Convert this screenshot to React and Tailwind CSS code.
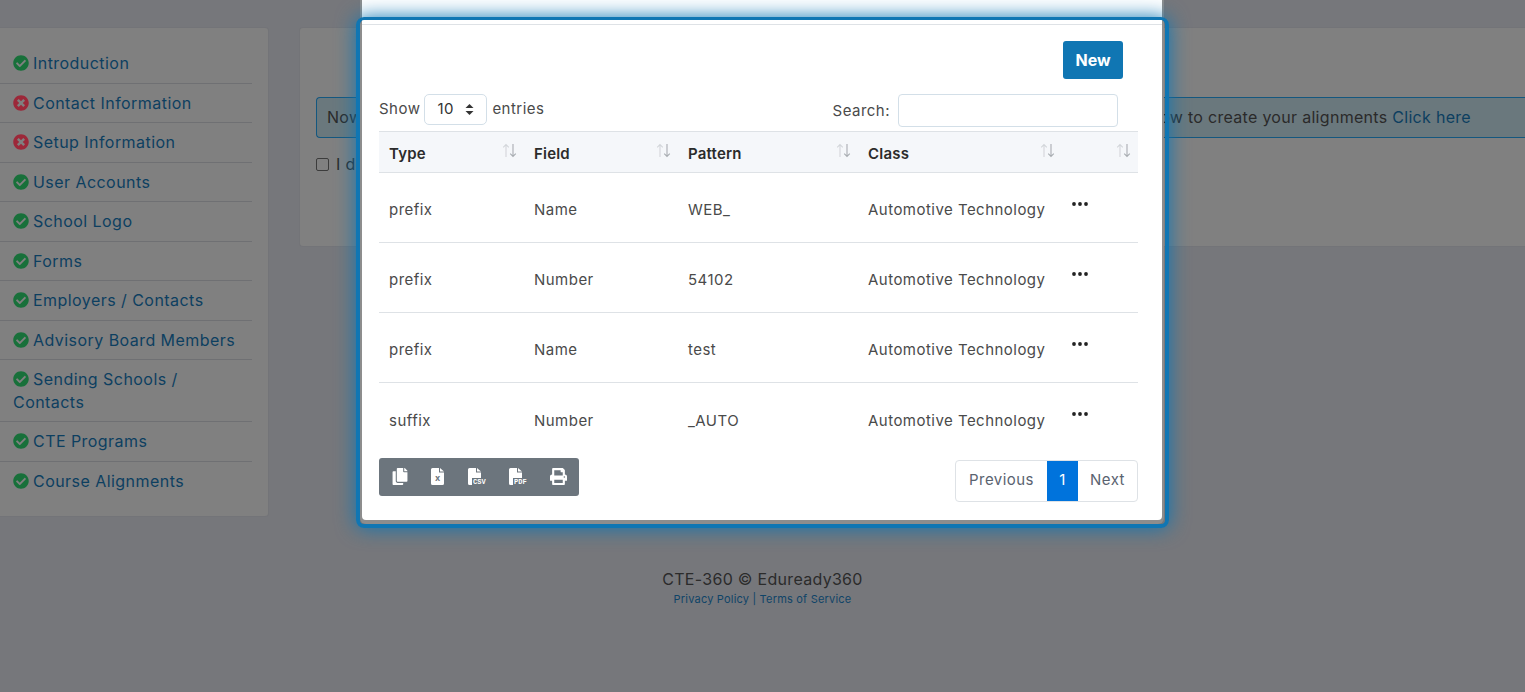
import { FaCheckCircle, FaTimesCircle, FaCopy, FaPrint } from 'react-icons/fa';

const menu = [
  { label: 'Introduction', ok: true },
  { label: 'Contact Information', ok: false },
  { label: 'Setup Information', ok: false },
  { label: 'User Accounts', ok: true },
  { label: 'School Logo', ok: true },
  { label: 'Forms', ok: true },
  { label: 'Employers / Contacts', ok: true },
  { label: 'Advisory Board Members', ok: true },
  { label: 'Sending Schools / Contacts', ok: true },
  { label: 'CTE Programs', ok: true },
  { label: 'Course Alignments', ok: true, last: true },
];

const rows = [
  ['prefix', 'Name', 'WEB_', 'Automotive Technology'],
  ['prefix', 'Number', '54102', 'Automotive Technology'],
  ['prefix', 'Name', 'test', 'Automotive Technology'],
  ['suffix', 'Number', '_AUTO', 'Automotive Technology'],
];

function SortIcon() {
  return (
    <svg width="15" height="15" viewBox="0 0 15 15" fill="none" className="absolute right-[7px] top-[11px]">
      <path d="M4 14V1.5M1.2 4.3 4 1.5l2.8 2.8" stroke="#d3d6da" strokeWidth="1.1" />
      <path d="M11 1v12.5M8.2 10.7 11 13.5l2.8-2.8" stroke="#a9adb2" strokeWidth="1.1" />
    </svg>
  );
}

function FileIcon({ label, small, className }) {
  return (
    <div className={`relative h-[18px] ${className}`}>
      <svg width="13" height="17" viewBox="0 0 13 17" className="absolute left-0 top-0">
        <path d="M1.5 0H8v4.5h5V15.5a1.5 1.5 0 0 1-1.5 1.5h-10A1.5 1.5 0 0 1 0 15.5v-14A1.5 1.5 0 0 1 1.5 0Z" fill="#fff" />
        <path d="M9 0l4 3.6H9Z" fill="#fff" />
      </svg>
      <span
        className={
          small
            ? 'absolute left-[4px] top-[5px] text-[9px] leading-[10px] tracking-normal font-bold text-[#6c757d]'
            : 'absolute left-[4px] top-[10px] px-[1px] bg-[#6c757d] text-[7px] leading-[8px] tracking-normal font-bold text-white font-["Liberation_Mono",monospace]'
        }
      >
        {label}
      </span>
    </div>
  );
}

export default function App() {
  return (
    <div className='relative h-[692px] overflow-hidden bg-[#76777b] font-["Inter",sans-serif] text-[15px] leading-[22.5px]'>
      <div className="flex items-start pt-[27px]">
        <div className="w-[269px] shrink-0 bg-[#808080] border border-l-0 border-[#737478] rounded-r-[4px] py-4 text-[16px] tracking-[0.45px]">
          {menu.map((item) => (
            <div
              key={item.label}
              className={`mr-4 pl-[13px] pr-4 pt-2 pb-2 text-[#0d3f60] ${item.last ? '' : 'border-b border-[#6f7073]'}`}
            >
              {item.ok ? (
                <FaCheckCircle className="inline-block w-4 h-4 mr-1 mb-[3px] text-[#18703a]" />
              ) : (
                <FaTimesCircle className="inline-block w-4 h-4 mr-1 mb-[3px] text-[#9c2839]" />
              )}
              {item.label}
            </div>
          ))}
        </div>

        <div className="ml-[30px] flex-1 h-[220px] bg-[#808080] border border-r-0 border-[#737478] rounded-l-[4px] pl-4 pt-[69px] text-[16px] tracking-[0.3px]">
          <div className="h-[41px] flex items-center justify-between border border-r-0 border-[#14577f] rounded-l-[4px] bg-[#6a787d] pl-[10px] pr-[54px] text-[#2a2a2a]">
            <span>Now you can</span>
            <span>
              how to create your alignments <span className="text-[#0d3f60]">Click here</span>
            </span>
          </div>
          <div className="mt-[15px] flex items-center text-[#2a2a2a]">
            <span className="w-[13px] h-[13px] border border-[#3c3c3c] rounded-[2px] mr-[7px]" />
            <span>I do not need this</span>
          </div>
        </div>
      </div>

      <div className="mt-[50px] text-center text-[#2b2b2b]">
        <div className="text-[16px] leading-[24px] tracking-[0.3px]">CTE-360 © Eduready360</div>
        <div className="text-[11px] leading-[16px] tracking-[0.2px] text-[#0f4468]">Privacy Policy | Terms of Service</div>
      </div>

      {/* modal */}
      <div className="absolute left-[362px] top-[-40px] w-[800px] h-[560px] bg-white rounded-[4px] shadow-[0_2px_0_2px_#8d8d8d] text-[#4a4a4a] tracking-[0.47px]">
        <div className="h-[65px] border-b border-[#dee2e6] pl-[157px] pt-[10px] text-[20px] leading-[30px]">
          Alignments
        </div>

        <div className="px-[17px] pt-4">
          <div className="flex justify-end pr-[22px]">
            <button className="w-[60px] h-[38px] bg-[#1076b3] rounded-[3px] text-white font-bold text-[16px] tracking-normal">New</button>
          </div>

          <div className="mt-[15px] h-[37px] flex items-start w-[759px]">
            <span className="mt-[4px]">Show</span>
            <div className="ml-1 w-[63px] h-[31px] flex items-center justify-between border border-[#d3dfe8] rounded-[5px] pl-[12px] pr-[12px] text-[#333]">
              <span>10</span>
              <svg width="9" height="13" viewBox="0 0 9 13" fill="#333">
                <path d="M4.5 1 8.5 5h-8ZM4.5 12 .5 8h8Z" />
              </svg>
            </div>
            <span className="ml-[5px] mt-[4px]">entries</span>
            <span className="ml-auto mt-[6px]">Search:</span>
            <div className="ml-2 mr-[20px] w-[220px] h-[33px] border border-[#d3dfe8] rounded-[4px]" />
          </div>

          <table className="w-[759px] table-fixed border-collapse">
            <colgroup>
              <col className="w-[145px]" />
              <col className="w-[154px]" />
              <col className="w-[180px]" />
              <col className="w-[204px]" />
              <col className="w-[76px]" />
            </colgroup>
            <thead>
              <tr className="h-[41px] bg-[#f5f7fa] border-y border-[#dee2e6] text-[#2b2b2b] text-left">
                {['Type', 'Field', 'Pattern', 'Class', ''].map((h) => (
                  <th key={h} className="relative px-[10px] pt-[4px] font-semibold tracking-[0.2px]">
                    {h}
                    <SortIcon />
                  </th>
                ))}
              </tr>
            </thead>
            <tbody>
              {rows.map((r, i) => (
                <tr key={i} className={`h-[70px] ${i < 3 ? 'border-b border-[#dee2e6]' : ''}`}>
                  {r.map((c, j) => (
                    <td key={j} className="px-[10px] pt-[6px]">{c}</td>
                  ))}
                  <td className="px-[10px]">
                    <svg width="16" height="4" viewBox="0 0 16 4" fill="#222" className="mb-[7px]">
                      <circle cx="2" cy="2" r="1.9" />
                      <circle cx="8" cy="2" r="1.9" />
                      <circle cx="14" cy="2" r="1.9" />
                    </svg>
                  </td>
                </tr>
              ))}
            </tbody>
          </table>

          <div className="mt-[5px] flex items-start justify-between w-[759px]">
            <div className="w-[200px] h-[38px] grid grid-cols-5 items-center bg-[#6c757d] rounded-[3px] text-white">
              <FaCopy className="w-[16px] h-[17px] ml-[13px]" />
              <FileIcon label="x" small className="ml-[12px]" />
              <FileIcon label="CSV" className="ml-[9px]" />
              <FileIcon label="PDF" className="ml-[10px]" />
              <FaPrint className="w-[17px] h-[17px] ml-[11px]" />
            </div>
            <div className="mt-[2px] h-[42px] flex border border-[#dee2e6] rounded-[4px] text-[#5a6370]">
              <div className="w-[91px] flex items-center justify-center">Previous</div>
              <div className="w-[31px] flex items-center justify-center bg-[#0073dc] text-white">1</div>
              <div className="w-[59px] flex items-center justify-center">Next</div>
            </div>
          </div>
        </div>

        {/* focus ring */}
        <div className="absolute left-[-6px] top-[57px] w-[813px] h-[511px] border-[4px] border-t-[3px] border-[#1076b3] rounded-[8px] shadow-[0_0_20px_#1076b3] pointer-events-none" />
      </div>
    </div>
  );
}
